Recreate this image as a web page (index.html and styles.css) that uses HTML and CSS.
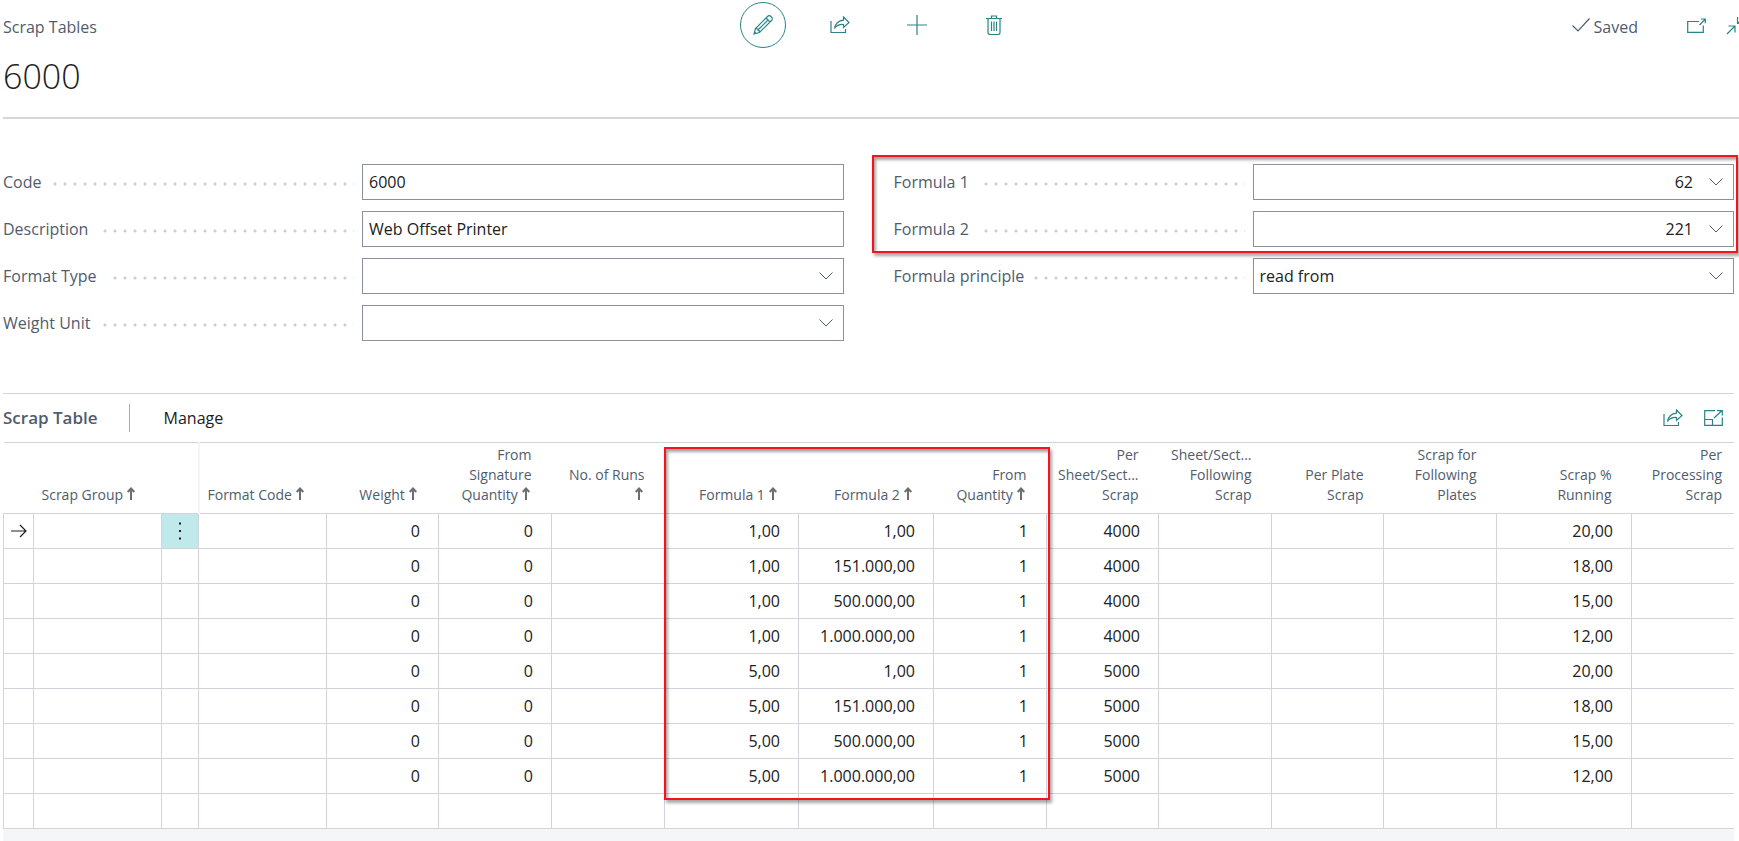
FILE: index.html
```html
<!DOCTYPE html>
<html lang="en">
<head>
    <meta charset="UTF-8">
    <meta name="viewport" content="width=device-width, initial-scale=1.0">
    <title>Scrap Tables - 6000</title>
    <link rel="stylesheet" href="styles.css">
</head>
<body>
<svg class="sprite" aria-hidden="true">
    <symbol id="chevron" viewBox="0 0 14 8"><path d="M0.5 0.5L7 7L13.5 0.5"/></symbol>
    <symbol id="share" viewBox="0 0 20 18"><path d="M1 5V16.5H15.5V13M13.5 1L19 6.5L13.5 11.500V8.500C9.500 8.200 6.500 9.500 4.500 12.500C5 8 8.500 4.500 13.500 4.200Z"/></symbol>
    <symbol id="up" viewBox="0 0 8 13"><path d="M4 13V1.500M0.700 5L4 1.500L7.300 5"/></symbol>
</svg>

<div class="page">
    <div class="topbar">
        <div class="caption">Scrap Tables</div>
        <div class="actions">
            <button type="button" class="icon_btn round" aria-label="Edit">
                <svg width="20" height="20" viewBox="0 0 20 20"><path d="M1 19L2.500 13.500L14.500 1.500C15.500 0.500 17 0.500 18 1.500L18.500 2C19.500 3 19.500 4.500 18.500 5.500L6.500 17.500ZM13 3L17 7M2.500 13.500C4.500 13.500 6.500 15 6.500 17.500M4.500 15.500L15 5M1.500 17L3 18.500"/></svg>
            </button>
            <button type="button" class="icon_btn" aria-label="Share"><svg width="20" height="18"><use href="#share"/></svg></button>
            <button type="button" class="icon_btn" aria-label="New"><svg width="20" height="20" viewBox="0 0 20 20"><path d="M10 0V20M0 10H20"/></svg></button>
            <button type="button" class="icon_btn" aria-label="Delete">
                <svg width="16" height="20" viewBox="0 0 16 20"><path d="M0 3.500H16M5.500 3.500V1H10.500V3.500M2 3.500V17.500Q2 19.500 4 19.500H12Q14 19.500 14 17.500V3.500M5.500 6.500V16M8 6.500V16M10.500 6.500V16"/></svg>
            </button>
        </div>
        <div class="status">
            <svg class="check" width="18" height="14" viewBox="0 0 18 14"><path d="M0.500 7.500L6 13L17.500 0.500"/></svg>
            <span class="saved">Saved</span>
            <button type="button" class="icon_btn small" aria-label="Open in new window">
                <svg width="19" height="15" viewBox="0 0 19 15"><path d="M12 3.500H0.700V14.300H16.300V7.500M12.500 7L18 1.500M14 1H18.300V5.300"/></svg>
            </button>
            <button type="button" class="icon_btn small" aria-label="Collapse">
                <svg width="20" height="20" viewBox="0 0 20 20"><path d="M1 19L8.500 11.500M2.500 11H9V17.500M19 1L11.500 8.500M11.500 2V8.500H18"/></svg>
            </button>
        </div>
    </div>
    <h1 class="title">6000</h1>

    <div class="fields">
        <div class="fieldcol">
            <div class="field">
                <label for="code"><span>Code</span></label>
                <div class="box"><input type="text" id="code" value="6000"></div>
            </div>
            <div class="field">
                <label for="descr"><span>Description</span></label>
                <div class="box"><input type="text" id="descr" value="Web Offset Printer"></div>
            </div>
            <div class="field">
                <label for="format"><span>Format Type</span></label>
                <div class="box"><select id="format"><option></option></select><svg class="chevron"><use href="#chevron"/></svg></div>
            </div>
            <div class="field">
                <label for="unit"><span>Weight Unit</span></label>
                <div class="box"><select id="unit"><option></option></select><svg class="chevron"><use href="#chevron"/></svg></div>
            </div>
        </div>
        <div class="fieldcol">
            <div class="field">
                <label for="f1"><span>Formula 1</span></label>
                <div class="box"><input type="text" class="num" id="f1" value="62"><svg class="chevron"><use href="#chevron"/></svg></div>
            </div>
            <div class="field">
                <label for="f2"><span>Formula 2</span></label>
                <div class="box"><input type="text" class="num" id="f2" value="221"><svg class="chevron"><use href="#chevron"/></svg></div>
            </div>
            <div class="field">
                <label for="principle"><span>Formula principle</span></label>
                <div class="box"><select id="principle"><option>read from</option></select><svg class="chevron"><use href="#chevron"/></svg></div>
            </div>
            <div class="mark mark_fields"></div>
        </div>
    </div>

    <div class="lines">
        <div class="lines_head">
            <h2>Scrap Table</h2>
            <button type="button" class="manage">Manage</button>
            <div class="lines_icons">
                <button type="button" class="icon_btn small" aria-label="Share"><svg width="20" height="18"><use href="#share"/></svg></button>
                <button type="button" class="icon_btn small" aria-label="Expand">
                    <svg width="19" height="16" viewBox="0 0 19 16"><path d="M11 0.700H0.700V15.300H18.300V7.500M0.700 9.500H8.500V15.300M10 8L17.500 1M13 0.700H18.300V5.500"/></svg>
                </button>
            </div>
        </div>
        <table>
            <colgroup>
                <col class="c30"><col class="c128"><col class="c37"><col class="c128"><col class="c112"><col class="c113"><col class="c113"><col class="c134"><col class="c135"><col class="c113"><col class="c112"><col class="c113"><col class="c112"><col class="c113"><col class="c135"><col>
            </colgroup>
            <thead>
            <tr>
                <th></th>
                <th class="left">Scrap Group <svg class="up"><use href="#up"/></svg></th>
                <th class="freeze"></th>
                <th class="left">Format Code <svg class="up"><use href="#up"/></svg></th>
                <th>Weight <svg class="up"><use href="#up"/></svg></th>
                <th>From<br>Signature<br>Quantity <svg class="up"><use href="#up"/></svg></th>
                <th>No. of Runs<br><svg class="up"><use href="#up"/></svg></th>
                <th>Formula 1 <svg class="up"><use href="#up"/></svg></th>
                <th>Formula 2 <svg class="up"><use href="#up"/></svg></th>
                <th>From<br>Quantity <svg class="up"><use href="#up"/></svg></th>
                <th>Per<br>Sheet/Sect...<br>Scrap</th>
                <th>Sheet/Sect...<br>Following<br>Scrap</th>
                <th>Per Plate<br>Scrap</th>
                <th>Scrap for<br>Following<br>Plates</th>
                <th>Scrap %<br>Running</th>
                <th class="last">Per<br>Processing<br>Scrap</th>
            </tr>
            </thead>
            <tbody>
            <tr>
                <td class="mid"><svg class="arrow" width="16" height="14" viewBox="0 0 16 14"><path d="M0 7H15M9 1L15 7L9 13"/></svg></td>
                <td></td>
                <td class="menu"><button type="button" aria-label="More options"><svg width="4" height="18" viewBox="0 0 4 18"><path d="M1 0.500h2v2h-2zM1 8h2v2h-2zM1 15.500h2v2h-2z"/></svg></button></td>
                <td></td><td>0</td><td>0</td><td></td><td>1,00</td><td>1,00</td><td>1</td><td>4000</td><td></td><td></td><td></td><td>20,00</td><td></td>
            </tr>
            <tr><td></td><td></td><td></td><td></td><td>0</td><td>0</td><td></td><td>1,00</td><td>151.000,00</td><td>1</td><td>4000</td><td></td><td></td><td></td><td>18,00</td><td></td></tr>
            <tr><td></td><td></td><td></td><td></td><td>0</td><td>0</td><td></td><td>1,00</td><td>500.000,00</td><td>1</td><td>4000</td><td></td><td></td><td></td><td>15,00</td><td></td></tr>
            <tr><td></td><td></td><td></td><td></td><td>0</td><td>0</td><td></td><td>1,00</td><td>1.000.000,00</td><td>1</td><td>4000</td><td></td><td></td><td></td><td>12,00</td><td></td></tr>
            <tr><td></td><td></td><td></td><td></td><td>0</td><td>0</td><td></td><td>5,00</td><td>1,00</td><td>1</td><td>5000</td><td></td><td></td><td></td><td>20,00</td><td></td></tr>
            <tr><td></td><td></td><td></td><td></td><td>0</td><td>0</td><td></td><td>5,00</td><td>151.000,00</td><td>1</td><td>5000</td><td></td><td></td><td></td><td>18,00</td><td></td></tr>
            <tr><td></td><td></td><td></td><td></td><td>0</td><td>0</td><td></td><td>5,00</td><td>500.000,00</td><td>1</td><td>5000</td><td></td><td></td><td></td><td>15,00</td><td></td></tr>
            <tr><td></td><td></td><td></td><td></td><td>0</td><td>0</td><td></td><td>5,00</td><td>1.000.000,00</td><td>1</td><td>5000</td><td></td><td></td><td></td><td>12,00</td><td></td></tr>
            <tr><td></td><td></td><td></td><td></td><td></td><td></td><td></td><td></td><td></td><td></td><td></td><td></td><td></td><td></td><td></td><td></td></tr>
            </tbody>
        </table>
        <div class="scroll"></div>
        <div class="mark mark_table"></div>
    </div>
</div>
</body>
</html>
```
FILE: styles.css
```css
*{
    box-sizing: border-box;
}
body{
    margin: 0px;
    font-family: "Open Sans", "Noto Sans", sans-serif;
    font-size: 16px;
    color: #212121;
    background: white;
    overflow: hidden;
}
svg{
    display: block;
    fill: none;
    stroke: #2a8387;
    stroke-width: 1.2;
}
.sprite{
    display: none;
}
button, input, select{
    font: inherit;
    color: inherit;
    margin: 0px;
    padding: 0px;
    border: 0;
    background: none;
}
.page{
    padding-left: 3px;
}

/* header */
.topbar{
    display: grid;
    grid-template-columns: 1fr auto 1fr;
    align-items: center;
    height: 48px;
    padding-top: 2px;
    margin-right: -15px;
}
.caption, .saved{
    color: #505c6d;
    line-height: 22px;
    padding-top: 3px;
}
.actions{
    display: flex;
    gap: 31px;
}
.icon_btn{
    display: flex;
    align-items: center;
    justify-content: center;
    width: 46px;
    height: 46px;
}
.round{
    border: 1px solid #2a8387;
    border-radius: 50%;
}
.small{
    width: 20px;
    height: 20px;
}
.status{
    display: flex;
    align-items: center;
    justify-content: flex-end;
    padding-right: 8px;
}
.status .small{
    margin-left: 20px;
}
.check{
    stroke: #505c6d;
}
.saved{
    padding-left: 4px;
    padding-right: 28px;
}
.title{
    margin: 0px;
    height: 71px;
    line-height: 56px;
    font-size: 34px;
    font-weight: 300;
    border-bottom: 2px solid #d3d6da;
}

/* fields */
.fields{
    display: grid;
    grid-template-columns: 1fr 1fr;
    column-gap: 50px;
    padding: 45px 5px 52px 0;
}
.fieldcol{
    position: relative;
    display: flex;
    flex-direction: column;
    gap: 11px;
}
.field{
    display: flex;
    height: 36px;
}
.field label{
    width: 351px;
    margin-right: 8px;
    line-height: 36px;
    color: #505c6d;
    background: radial-gradient(circle at 2px 20px, #ccced1 1px, transparent 2px) 0 0 / 10px 36px;
}
.field label span{
    display: inline-block;
    padding-right: 10px;
    background: white;
}
.box{
    flex: 1;
    display: grid;
    align-items: center;
    border: 1px solid #8b909f;
}
.box input, .box select, .chevron{
    grid-area: 1 / 1;
}
.box input, .box select{
    width: 100%;
    height: 34px;
    padding: 0 6px;
    appearance: none;
    outline: none;
}
.box .num{
    padding-right: 40px;
    text-align: right;
}
.chevron{
    width: 14px;
    height: 8px;
    margin-right: 10px;
    justify-self: end;
    stroke: #505c6d;
    stroke-width: 1;
    pointer-events: none;
}

/* lines */
.lines{
    position: relative;
    margin-right: 5px;
    border-top: 1px solid #d2d4d9;
}
.lines_head{
    display: flex;
    align-items: center;
    height: 48px;
}
.lines_head h2{
    margin: 0px;
    padding-right: 31px;
    font-size: 17px;
    font-weight: 600;
    line-height: 28px;
    color: #505c6d;
    border-right: 1px solid #a6a9b0;
}
.manage{
    margin-left: 34px;
}
.lines_icons{
    display: flex;
    gap: 20px;
    margin-left: auto;
    padding-right: 11px;
}
table{
    width: 100%;
    table-layout: fixed;
    border-collapse: collapse;
}
.c30{ width: 30px; }
.c37{ width: 37px; }
.c112{ width: 112px; }
.c113{ width: 113px; }
.c128{ width: 128px; }
.c134{ width: 134px; }
.c135{ width: 135px; }
th{
    height: 71px;
    padding: 2px 20px 8px 0;
    font-size: 14px;
    font-weight: normal;
    line-height: 20px;
    color: #505c6d;
    text-align: right;
    vertical-align: bottom;
    white-space: nowrap;
    border-top: 1px solid #d2d4d9;
}
.left{
    text-align: left;
    padding-left: 8px;
    padding-right: 0;
}
.last{
    padding-right: 12px;
}
.freeze{
    border-right: 2px solid #f3f4f6;
}
.up{
    display: inline-block;
    width: 8px;
    height: 13px;
    margin-right: 2px;
    stroke: #6e6e6e;
    stroke-width: 2;
}
td{
    height: 35px;
    padding: 0 18px 0 0;
    line-height: 34px;
    text-align: right;
    border: 1px solid #d2d4d9;
}
td:last-child{
    border-right: 0;
}
.mid{
    padding: 0 0 0 7px;
}
.arrow{
    stroke: #212121;
}
.menu{
    padding: 0;
    background: #bfe9eb;
}
.menu button{
    display: flex;
    align-items: center;
    justify-content: center;
    width: 100%;
    height: 34px;
}
.menu svg{
    fill: #212121;
    stroke: none;
}
.scroll{
    height: 14px;
    background: #f5f6f8;
}

/* red highlight frames */
.mark{
    position: absolute;
    border: 2px solid #f5141e;
    box-shadow: 2px 3px 3px rgba(0,0,0,0.35), inset 2px 3px 3px rgba(0,0,0,0.35);
    pointer-events: none;
}
.mark_fields{
    top: -9px;
    left: -22px;
    right: -4px;
    height: 98px;
}
.mark_table{
    top: 53px;
    left: 661px;
    width: 386px;
    height: 353px;
}
```
